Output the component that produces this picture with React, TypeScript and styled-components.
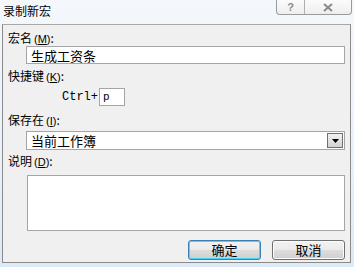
import React from "react";
import styled, { createGlobalStyle } from "styled-components";

const GlobalStyle = createGlobalStyle`
  html, body {
    margin: 0;
    padding: 0;
  }
  body {
    font-family: "Noto Sans CJK SC", "Liberation Sans", sans-serif;
    font-size: 12px;
    color: #000;
  }
`;

const Window = styled.div`
  width: 354px;
  height: 267px;
  display: flex;
  flex-direction: column;
  background: linear-gradient(180deg, #f4f8fc 0%, #e9f1f9 60%, #dceaf7 100%);
  overflow: hidden;
`;

const TitleBar = styled.div`
  height: 24px;
  flex: none;
  display: flex;
  justify-content: space-between;
  align-items: flex-start;
`;

const Title = styled.div`
  padding: 3px 0 0 3px;
  font-size: 12px;
  line-height: 16px;
  color: #000;
`;

const CaptionButtons = styled.div`
  display: flex;
  margin-right: 2px;
  height: 14px;
  border: 1px solid #9a9a9a;
  border-top: none;
  border-radius: 0 0 4px 4px;
  background: linear-gradient(180deg, #fbfbfb 0%, #eeeeee 100%);
  overflow: hidden;
`;

const CaptionButton = styled.div<{ $w: number }>`
  width: ${(p) => p.$w}px;
  display: flex;
  align-items: center;
  justify-content: center;
  color: #8a8a8a;
  font-family: "Liberation Sans", sans-serif;
  font-size: 11px;
  font-weight: bold;
  & + & {
    border-left: 1px solid #b0b0b0;
  }
`;

const Client = styled.div`
  flex: 1;
  margin: 0 3px 4px 2px;
  border: 1px solid #8a8a8a;
  border-top-color: #a8a8a8;
  background: #f0f0f0;
  padding: 6px 5px 0 5px;
  display: flex;
  flex-direction: column;
`;

const Label = styled.div<{ $top: number }>`
  margin-top: ${(p) => p.$top}px;
  line-height: 14px;
  height: 14px;
  white-space: nowrap;
`;

const Key = styled.span`
  margin-left: 2px;
  font-family: "Liberation Sans", sans-serif;
  font-size: 11px;
`;

const Accel = styled.span`
  text-decoration: underline;
`;

const TextBox = styled.div<{ $top: number }>`
  margin: ${(p) => p.$top}px 0 0 18px;
  height: 18px;
  box-sizing: border-box;
  border: 1px solid #a5a5a5;
  background: #fff;
  padding: 0 0 0 4px;
  display: flex;
  align-items: center;
  font-size: 13px;
`;

const ShortcutRow = styled.div`
  margin: 5px 0 0 54px;
  display: flex;
  align-items: center;
  height: 18px;
`;

const Mono = styled.span`
  font-family: "Liberation Mono", monospace;
  font-size: 12px;
  margin-right: 1px;
`;

const KeyBox = styled.div`
  width: 26px;
  height: 18px;
  box-sizing: border-box;
  border: 1px solid #a5a5a5;
  background: #fff;
  font-family: "Liberation Mono", monospace;
  font-size: 11px;
  padding-left: 3px;
  display: flex;
  align-items: center;
`;

const Combo = styled.div`
  margin: 4px 0 0 18px;
  height: 19px;
  box-sizing: border-box;
  border: 1px solid #a5a5a5;
  background: #fff;
  display: flex;
  align-items: stretch;
`;

const ComboText = styled.div`
  flex: 1;
  padding-left: 4px;
  display: flex;
  align-items: center;
  font-size: 13px;
`;

const DropButton = styled.div`
  width: 16px;
  margin: 1px;
  box-sizing: border-box;
  border: 1px solid #707070;
  background: linear-gradient(180deg, #f2f2f2 0%, #e2e2e2 50%, #d2d2d2 100%);
  display: flex;
  align-items: center;
  justify-content: center;
`;

const Memo = styled.div`
  margin: 7px 0 0 19px;
  height: 54px;
  border: 1px solid #a5a5a5;
  background: #fff;
`;

const ButtonRow = styled.div`
  margin-top: 9px;
  display: flex;
  justify-content: flex-end;
  gap: 11px;
`;

const Button = styled.button<{ $default?: boolean }>`
  width: 73px;
  height: 20px;
  padding: 0;
  box-sizing: border-box;
  border: 1px solid ${(p) => (p.$default ? "#3c7fb1" : "#707070")};
  border-radius: 3px;
  background: linear-gradient(180deg, #f2f2f2 0%, #ebebeb 48%, #dddddd 52%, #cfcfcf 100%);
  box-shadow: ${(p) =>
    p.$default ? "inset 0 0 0 1px #48d5f7" : "inset 0 0 0 1px #fcfcfc"};
  font-family: "Noto Sans CJK SC", sans-serif;
  font-size: 13px;
  line-height: 16px;
  color: #000;
`;

export default function App() {
  return (
    <>
      <GlobalStyle />
      <Window>
        <TitleBar>
          <Title>录制新宏</Title>
          <CaptionButtons>
            <CaptionButton $w={27}>?</CaptionButton>
            <CaptionButton $w={46}>
              <svg width="10" height="9" viewBox="0 0 10 9">
                <path
                  d="M1 1 L9 8 M9 1 L1 8"
                  stroke="#8a8a8a"
                  strokeWidth="2"
                  fill="none"
                />
              </svg>
            </CaptionButton>
          </CaptionButtons>
        </TitleBar>
        <Client>
          <Label $top={0}>
            宏名<Key>(<Accel>M</Accel>)</Key>:
          </Label>
          <TextBox $top={1}>生成工资条</TextBox>
          <Label $top={5}>
            快捷键<Key>(<Accel>K</Accel>)</Key>:
          </Label>
          <ShortcutRow>
            <Mono>Ctrl+</Mono>
            <KeyBox>p</KeyBox>
          </ShortcutRow>
          <Label $top={7}>
            保存在<Key>(<Accel>I</Accel>)</Key>:
          </Label>
          <Combo>
            <ComboText>当前工作簿</ComboText>
            <DropButton>
              <svg width="7" height="4" viewBox="0 0 7 4">
                <path d="M0 0 H7 L3.5 4 Z" fill="#000" />
              </svg>
            </DropButton>
          </Combo>
          <Label $top={4}>
            说明<Key>(<Accel>D</Accel>)</Key>:
          </Label>
          <Memo />
          <ButtonRow>
            <Button $default>确定</Button>
            <Button>取消</Button>
          </ButtonRow>
        </Client>
      </Window>
    </>
  );
}
